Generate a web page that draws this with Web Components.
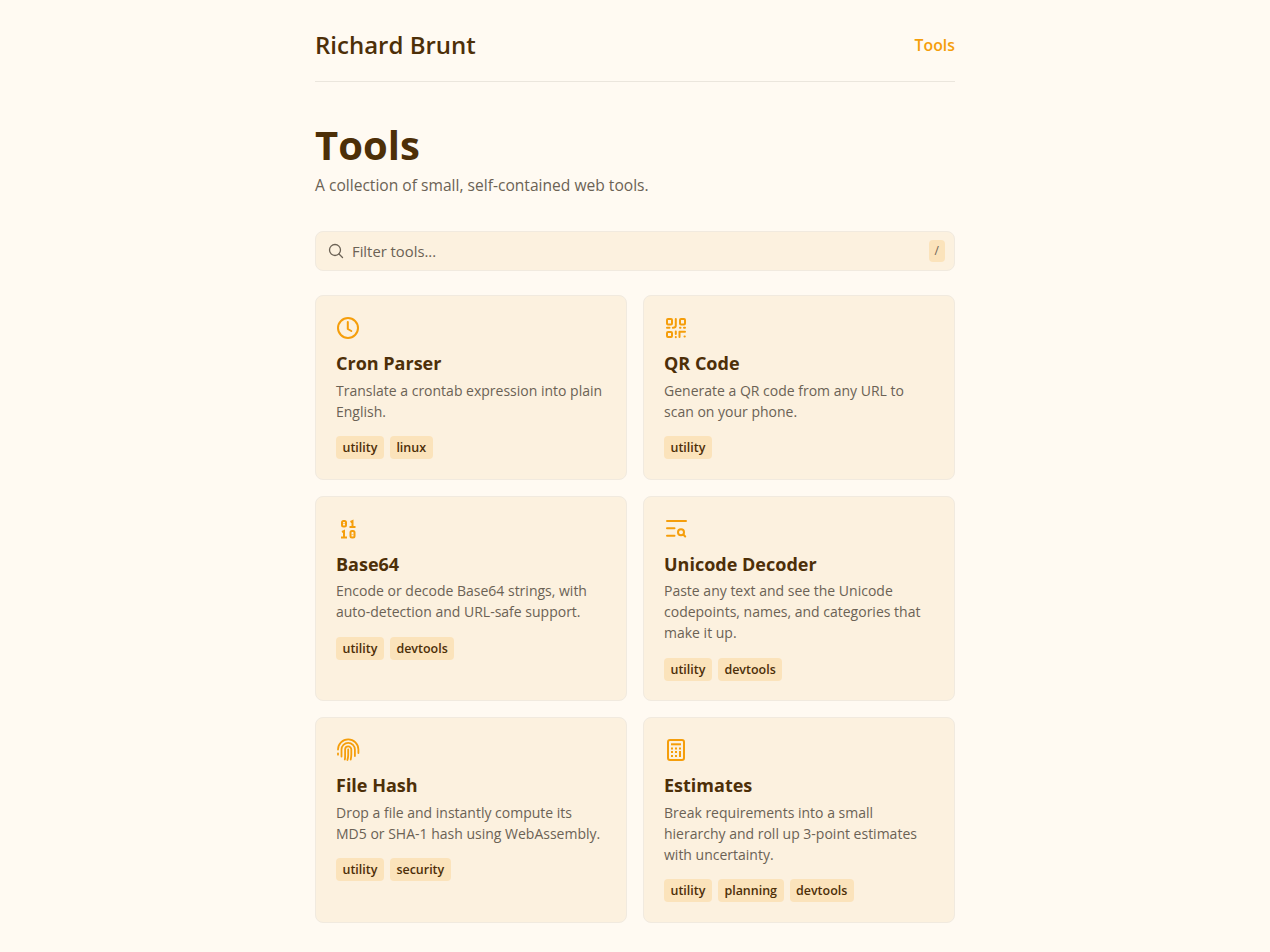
<!DOCTYPE html>
<html lang="en"><head><meta charset="utf-8"><title>Tools</title>
<style>
html,body{margin:0;padding:0;background:#fffaf2}
body{font-family:"Open Sans",sans-serif;color:#4d2f08}
</style></head><body>
<template id="t-page"><style>
:host{display:block;width:640px;margin:0 auto}
</style><slot></slot></template>
<template id="t-header"><style>
:host{display:flex;justify-content:space-between;align-items:center;height:81px;border-bottom:1px solid #ebe6dd}
.n{font-size:24px;font-weight:600;color:#4d2f08;line-height:32px;margin-top:9px}
.l{font-size:15.84px;font-weight:600;color:#f59e0b;margin-top:9px}
</style><span class="n">Richard Brunt</span><span class="l">Tools</span></template>
<template id="t-hero"><style>
:host{display:block;padding-top:39px}
h1{margin:0;font-size:40px;line-height:48px;font-weight:700;color:#4d2f08}
p{margin:4px 0 0;font-size:15.6px;line-height:24px;color:#6b6255}
</style><h1>Tools</h1><p>A collection of small, self-contained web tools.</p></template>
<template id="t-search"><style>
:host{display:flex;align-items:center;height:38px;margin-top:34px;background:#fcf1df;border:1px solid #f1eadf;border-radius:8px;padding:0 9px 0 12px;gap:8px}
svg{width:16px;height:16px;fill:none;stroke:#6b6255;stroke-width:1.3;stroke-linecap:round;flex:none}
.t{flex:1;font-size:14.8px;color:#6b6255}
kbd{font:12px/22px "Open Sans",sans-serif;background:#fbe3bb;color:#6b6255;border-radius:4px;padding:0 6px}
</style><svg viewBox="0 0 16 16"><circle cx="7" cy="7" r="5.500"/><path d="M11 11l3.500 3.500"/></svg><span class="t">Filter tools...</span><kbd>/</kbd></template>
<template id="t-grid"><style>
:host{display:grid;grid-template-columns:1fr 1fr;gap:16px;margin-top:24px;padding-bottom:30px}
</style><slot></slot></template>
<template id="t-card"><style>
:host{display:block;background:#fcf1df;border:1px solid #f1eadf;border-radius:8px;padding:20px 20px 19.4px}
.i{display:block;width:24px;height:24px;color:#f59e0b}
::slotted(svg){display:block;width:24px;height:24px}
h2{margin:11px 0 0;font-size:18px;line-height:24px;font-weight:700;color:#4d2f08}
p{margin:5.8px 0 0;font-size:14px;line-height:20.85px;color:#6b6255}
.tags{display:flex;gap:6px;margin-top:13.5px}
</style><div class="i"><slot name="icon"></slot></div><h2></h2><p></p><div class="tags"><slot></slot></div></template>
<template id="t-tag"><style>
:host{display:inline-block;font-size:12.48px;font-weight:600;line-height:23.3px;padding:0 6.5px;border-radius:4px;background:#fbe3bb;color:#4d2f08}
</style><slot></slot></template>

<tool-page>
<site-header></site-header>
<tools-hero></tools-hero>
<tool-search></tool-search>
<tool-grid>
<tool-card name="Cron Parser" desc="Translate a crontab expression into plain English.">
<svg slot="icon" viewBox="0 0 24 24" fill="none" stroke="currentColor" stroke-width="2" stroke-linecap="round" stroke-linejoin="round"><circle cx="12" cy="12" r="10"/><path d="M11.800 6v7l3.500 2"/></svg>
<tool-tag>utility</tool-tag><tool-tag>linux</tool-tag></tool-card>
<tool-card name="QR Code" desc="Generate a QR code from any URL to scan on your phone.">
<svg slot="icon" viewBox="0 0 24 24" fill="none" stroke="currentColor" stroke-width="2" stroke-linecap="round" stroke-linejoin="round"><rect x="3" y="3" width="5" height="5.500" rx="1"/><rect x="16" y="3" width="5" height="5.500" rx="1"/><rect x="3" y="16" width="5" height="5" rx="1"/><path d="M11.800 3v6.500c0 1.500-1 2.200-3 2.200M3 11.700h2.500M16 11.700h.500M20 11.700h1M11.800 15.500v2.500M11.800 21v.300M21 15.700h-5.500V21M20.500 20.500h.300"/></svg>
<tool-tag>utility</tool-tag></tool-card>
<tool-card name="Base64" desc="Encode or decode Base64 strings, with auto-detection and URL-safe support.">
<svg slot="icon" viewBox="0 0 24 24" fill="none" stroke="currentColor" stroke-width="2"><rect x="6" y="4" width="4" height="5.500" rx="1.500"/><path d="M8 6.500v.500M14.500 5l2-1v6M13.500 10h6"/><path d="M6 15l2-1v7M5 20.500h6"/><rect x="14.500" y="14" width="4" height="6.500" rx="1.500"/><path d="M16.500 17v.500"/></svg>
<tool-tag>utility</tool-tag><tool-tag>devtools</tool-tag></tool-card>
<tool-card name="Unicode Decoder" desc="Paste any text and see the Unicode codepoints, names, and categories that make it up.">
<svg slot="icon" viewBox="0 0 24 24" fill="none" stroke="currentColor" stroke-width="2" stroke-linecap="round"><path d="M3 4h19M3 11.300h7.500M3 18.700h7.500"/><circle cx="17" cy="15.200" r="3"/><path d="M19.500 17.800l1.700 1.700"/></svg>
<tool-tag>utility</tool-tag><tool-tag>devtools</tool-tag></tool-card>
<tool-card name="File Hash" desc="Drop a file and instantly compute its MD5 or SHA-1 hash using WebAssembly.">
<svg slot="icon" viewBox="0 0 24 24" fill="none" stroke="currentColor" stroke-width="1.800" stroke-linecap="round"><path d="M2 11.500A10.200 10.200 0 0 1 22.400 11.500V15"/><path d="M2 15.500v1.200"/><path d="M5.500 18.500V11.500A6.700 6.700 0 0 1 18.900 11.500V18"/><path d="M8.800 21.500c.3-1 .3-2 .3-3V11.500A3.100 3.100 0 0 1 15.300 11.500V16.500c0 1.500-.2 3-.6 5"/><path d="M12.200 11.500V17c0 1.500-.2 3-.8 5"/></svg>
<tool-tag>utility</tool-tag><tool-tag>security</tool-tag></tool-card>
<tool-card name="Estimates" desc="Break requirements into a small hierarchy and roll up 3-point estimates with uncertainty.">
<svg slot="icon" viewBox="0 0 24 24" fill="none" stroke="currentColor" stroke-width="2"><rect x="4" y="2" width="16" height="20" rx="2"/><path d="M7 6.300h10"/><path d="M7 10.500h2M11 10.500h2M15 10.500h2M7 14h2M11 14h2M7 18h2M11 18h2M16 13v6"/></svg>
<tool-tag>utility</tool-tag><tool-tag>planning</tool-tag><tool-tag>devtools</tool-tag></tool-card>
</tool-grid>
</tool-page>
<script>
function def(name,tid,init){customElements.define(name,class extends HTMLElement{constructor(){super();const s=this.attachShadow({mode:"open"});s.appendChild(document.getElementById(tid).content.cloneNode(true));}connectedCallback(){if(init)init(this)}})}
def("tool-page","t-page");def("site-header","t-header");def("tools-hero","t-hero");def("tool-search","t-search");def("tool-grid","t-grid");def("tool-tag","t-tag");
def("tool-card","t-card",el=>{el.shadowRoot.querySelector("h2").textContent=el.getAttribute("name");el.shadowRoot.querySelector("p").textContent=el.getAttribute("desc")});
</script>
</body></html>
